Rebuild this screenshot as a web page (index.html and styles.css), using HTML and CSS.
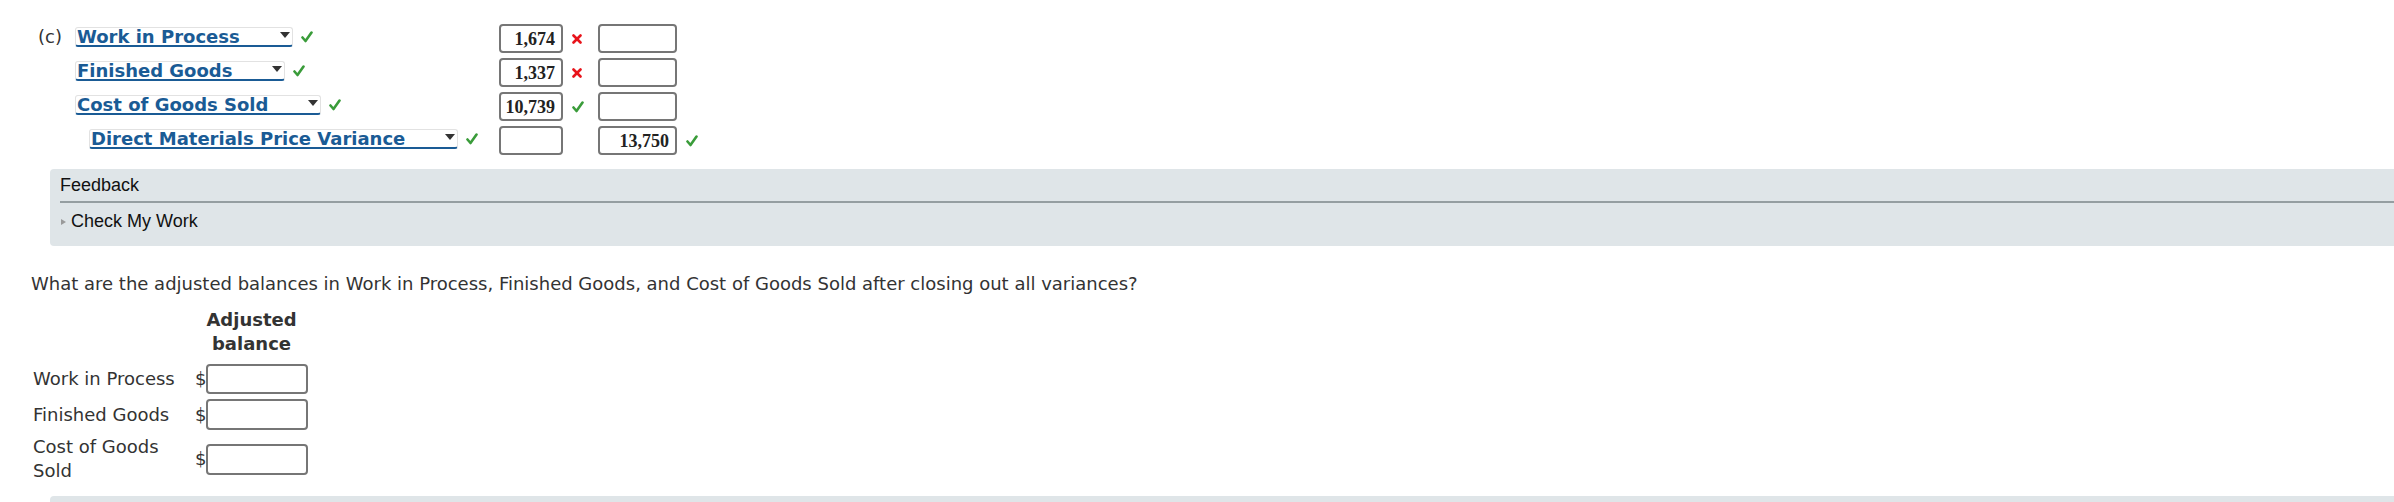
FILE: index.html
```html
<!DOCTYPE html>
<html lang="en">
<head>
<meta charset="utf-8">
<title>Closing variances</title>
<link rel="stylesheet" href="styles.css">
</head>
<body>
<div class="journal">
  <div class="row">
    <div class="acct">
      <span class="part">(c)</span>
      <span class="sel"><span class="sel-text">Work in Process</span><span class="caret"></span></span>
      <svg class="ok" width="12" height="12" viewBox="0 0 12 12"><polyline points="1.5,6.5 4.5,10 10.5,1.5"/></svg>
    </div>
    <div class="amt">1,674</div>
    <div class="mark"><svg class="bad" width="10" height="10" viewBox="0 0 10 10"><line x1="1.5" y1="1.5" x2="8.5" y2="8.5"/><line x1="8.5" y1="1.5" x2="1.5" y2="8.5"/></svg></div>
    <div class="amt"></div>
    <div class="mark"></div>
  </div>
  <div class="row">
    <div class="acct">
      <span class="part"></span>
      <span class="sel"><span class="sel-text">Finished Goods</span><span class="caret"></span></span>
      <svg class="ok" width="12" height="12" viewBox="0 0 12 12"><polyline points="1.5,6.5 4.5,10 10.5,1.5"/></svg>
    </div>
    <div class="amt">1,337</div>
    <div class="mark"><svg class="bad" width="10" height="10" viewBox="0 0 10 10"><line x1="1.5" y1="1.5" x2="8.5" y2="8.5"/><line x1="8.5" y1="1.5" x2="1.5" y2="8.5"/></svg></div>
    <div class="amt"></div>
    <div class="mark"></div>
  </div>
  <div class="row">
    <div class="acct">
      <span class="part"></span>
      <span class="sel"><span class="sel-text">Cost of Goods Sold</span><span class="caret"></span></span>
      <svg class="ok" width="12" height="12" viewBox="0 0 12 12"><polyline points="1.5,6.5 4.5,10 10.5,1.5"/></svg>
    </div>
    <div class="amt">10,739</div>
    <div class="mark"><svg class="ok" width="12" height="12" viewBox="0 0 12 12"><polyline points="1.5,6.5 4.5,10 10.5,1.5"/></svg></div>
    <div class="amt"></div>
    <div class="mark"></div>
  </div>
  <div class="row">
    <div class="acct">
      <span class="part"></span>
      <span class="sel credit"><span class="sel-text">Direct Materials Price Variance</span><span class="caret"></span></span>
      <svg class="ok" width="12" height="12" viewBox="0 0 12 12"><polyline points="1.5,6.5 4.5,10 10.5,1.5"/></svg>
    </div>
    <div class="amt"></div>
    <div class="mark"></div>
    <div class="amt">13,750</div>
    <div class="mark"><svg class="ok" width="12" height="12" viewBox="0 0 12 12"><polyline points="1.5,6.5 4.5,10 10.5,1.5"/></svg></div>
  </div>
</div>

<div class="feedback">
  <div class="fb-title">Feedback</div>
  <div class="fb-link"><span class="tri"></span>Check My Work</div>
</div>

<p class="question">What are the adjusted balances in Work in Process, Finished Goods, and Cost of Goods Sold after closing out all variances?</p>

<div class="balances">
  <div class="bal-head">Adjusted<br>balance</div>
  <div class="bal-label">Work in Process</div>
  <div class="dollar">$</div>
  <div class="bal-input"></div>
  <div class="bal-label">Finished Goods</div>
  <div class="dollar">$</div>
  <div class="bal-input tall"></div>
  <div class="bal-label">Cost of Goods Sold</div>
  <div class="dollar">$</div>
  <div class="bal-input tall"></div>
</div>

<div class="next-panel"></div>
</body>
</html>
```

FILE: styles.css
```css
html, body {
  margin: 0;
  padding: 0;
  background: #ffffff;
  overflow: hidden;
}

body {
  font-family: "DejaVu Sans", Verdana, sans-serif;
  font-size: 18px;
  color: #333333;
}

.journal {
  padding: 24px 0 0 38px;
}

.row {
  display: grid;
  grid-template-columns: 461px 64px 35px 79px 20px;
  height: 29px;
  margin-bottom: 5px;
}

.acct {
  display: flex;
  align-items: baseline;
  padding-top: 3px;
}

.part {
  width: 37px;
  flex: none;
  line-height: 17px;
  color: #333333;
}

.sel {
  display: inline-flex;
  align-items: flex-start;
  height: 20px;
  box-sizing: border-box;
  border: 1px solid #e2e2e2;
  border-bottom: 2px solid #1a5b95;
  border-radius: 3px;
  padding: 0 2px 0 1px;
  background: #ffffff;
}

.sel.credit {
  margin-left: 14px;
}

.sel-text {
  font-weight: bold;
  line-height: 17px;
  color: #1a5b95;
  white-space: nowrap;
}

.caret {
  width: 0;
  height: 0;
  margin: 4px 0 0 40px;
  border-left: 5px solid transparent;
  border-right: 5px solid transparent;
  border-top: 6px solid #333333;
}

.ok {
  margin-left: 8px;
  flex: none;
}

.ok polyline {
  fill: none;
  stroke: #3a9c3a;
  stroke-width: 2.6;
  stroke-linecap: round;
  stroke-linejoin: round;
}

.bad line {
  stroke: #e8141b;
  stroke-width: 2.6;
  stroke-linecap: round;
}

.amt {
  height: 29px;
  box-sizing: border-box;
  border: 2px solid #767676;
  border-radius: 4px;
  padding: 2px 6px 0 0;
  font-family: "Liberation Serif", "Times New Roman", serif;
  font-weight: bold;
  font-size: 18px;
  line-height: 23px;
  text-align: right;
  color: #222222;
  background: #ffffff;
}

.mark {
  display: flex;
  align-items: center;
  padding-left: 9px;
}

.mark .ok {
  margin-left: 0;
}

.feedback {
  margin: 14px 0 0 50px;
  background: #dfe5e8;
  border-radius: 4px 0 0 4px;
  padding: 5px 0 14px 10px;
  font-family: "Liberation Sans", Arial, sans-serif;
  font-size: 18px;
  color: #111111;
}

.fb-title {
  line-height: 22px;
  padding-bottom: 5px;
  border-bottom: 2px solid #959ea1;
}

.fb-link {
  display: flex;
  align-items: center;
  line-height: 22px;
  margin-top: 7px;
}

.tri {
  width: 0;
  height: 0;
  margin: 2px 5px 0 1px;
  border-top: 3px solid transparent;
  border-bottom: 3px solid transparent;
  border-left: 5px solid #9a9a9a;
}

.question {
  margin: 26px 0 0 0;
  padding-left: 31px;
  line-height: 24px;
}

.balances {
  display: grid;
  grid-template-columns: 162px 11px 102px;
  row-gap: 5px;
  align-items: center;
  padding-left: 33px;
  margin-top: 12px;
}

.bal-head {
  grid-column: 2 / 4;
  text-align: center;
  font-weight: bold;
  line-height: 24px;
  margin-bottom: 3px;
}

.bal-label {
  line-height: 24px;
}

.dollar {
  line-height: 24px;
}

.bal-input {
  height: 30px;
  box-sizing: border-box;
  border: 2px solid #767676;
  border-radius: 4px;
  background: #ffffff;
}

.bal-input.tall {
  height: 31px;
}

.next-panel {
  margin: 13px 0 0 50px;
  height: 10px;
  background: #dfe5e8;
  border-radius: 4px 0 0 0;
}
```
